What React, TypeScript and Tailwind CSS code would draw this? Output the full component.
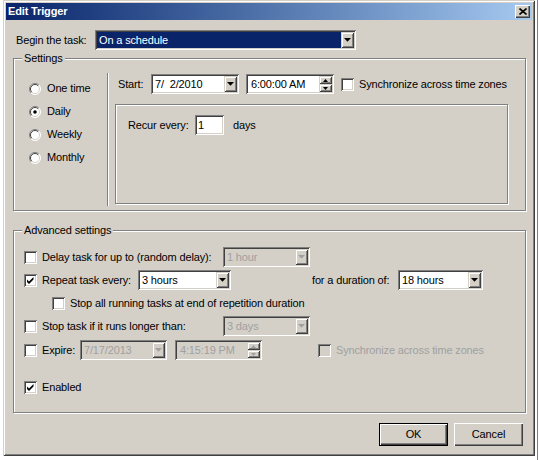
import type { ReactNode } from "react";

const sunken =
  "shadow-[inset_1px_1px_0_#808080,inset_-1px_-1px_0_#ffffff,inset_2px_2px_0_#404040,inset_-2px_-2px_0_#d4d0c8]";
const raised =
  "shadow-[inset_1px_1px_0_#d4d0c8,inset_-1px_-1px_0_#404040,inset_2px_2px_0_#ffffff,inset_-2px_-2px_0_#808080]";
const buttonRaised =
  "shadow-[inset_1px_1px_0_#ffffff,inset_-1px_-1px_0_#404040,inset_-2px_-2px_0_#808080]";
const etched = "border border-[#808080] shadow-[inset_1px_1px_0_#ffffff,1px_1px_0_#ffffff]";
const grayText = "text-[#a0a0a0]";

function Arrow({ up = false, small = false, disabled = false }: { up?: boolean; small?: boolean; disabled?: boolean }) {
  const fill = disabled ? "#a0a0a0" : "#000000";
  if (small) {
    return (
      <svg width="5" height="3" viewBox="0 0 5 3">
        <path d={up ? "M0 3h5L2.5 0z" : "M0 0h5L2.5 3z"} fill={fill} />
      </svg>
    );
  }
  return (
    <svg width="7" height="4" viewBox="0 0 7 4">
      <path d="M0 0h7L3.5 3.8z" fill={fill} />
    </svg>
  );
}

function DropButton({ disabled = false }: { disabled?: boolean }) {
  return (
    <div className={`flex w-[13px] shrink-0 items-center justify-center bg-[#d4d0c8] ${raised}`}>
      <Arrow disabled={disabled} />
    </div>
  );
}

function Combo({
  value,
  width,
  disabled = false,
  selected = false,
}: {
  value: string;
  width: string;
  disabled?: boolean;
  selected?: boolean;
}) {
  return (
    <div className={`flex h-[20px] shrink-0 p-[2px] ${width} ${sunken} ${disabled ? "bg-[#d4d0c8]" : "bg-white"}`}>
      <div
        className={`flex min-w-0 flex-1 items-center whitespace-pre pl-[2px] ${
          selected ? "bg-[#0a246a] text-white" : ""
        } ${disabled ? grayText : ""}`}
      >
        {value}
      </div>
      <DropButton disabled={disabled} />
    </div>
  );
}

function TimeField({ value, width, disabled = false }: { value: string; width: string; disabled?: boolean }) {
  return (
    <div className={`flex h-[20px] shrink-0 p-[2px] ${width} ${sunken} ${disabled ? "bg-[#d4d0c8]" : "bg-white"}`}>
      <div className={`flex flex-1 items-center whitespace-pre pl-[3px] ${disabled ? grayText : ""}`}>{value}</div>
      <div className="flex w-[13px] shrink-0 flex-col">
        <div className={`flex flex-1 items-center justify-center bg-[#d4d0c8] ${raised}`}>
          <Arrow up small disabled={disabled} />
        </div>
        <div className={`flex flex-1 items-center justify-center bg-[#d4d0c8] ${raised}`}>
          <Arrow small disabled={disabled} />
        </div>
      </div>
    </div>
  );
}

function Checkbox({ checked = false, disabled = false }: { checked?: boolean; disabled?: boolean }) {
  return (
    <div className={`h-[13px] w-[13px] shrink-0 ${sunken} ${disabled ? "bg-[#d4d0c8]" : "bg-white"}`}>
      {checked && (
        <svg width="13" height="13" viewBox="0 0 13 13">
          <path d="M3 5.5L5 7.5L9.5 3V5.5L5 10L3 8z" fill={disabled ? "#808080" : "#000000"} />
        </svg>
      )}
    </div>
  );
}

function Radio({ checked = false }: { checked?: boolean }) {
  return (
    <svg width="12" height="12" viewBox="0 0 12 12" className="shrink-0">
      <circle cx="6" cy="6" r="5.5" fill="#ffffff" />
      <path d="M2.1 9.9A5.5 5.5 0 0 1 9.9 2.1" stroke="#808080" fill="none" />
      <path d="M9.9 2.1A5.5 5.5 0 0 1 2.1 9.9" stroke="#ffffff" fill="none" />
      <path d="M2.8 9.2A4.5 4.5 0 0 1 9.2 2.8" stroke="#404040" fill="none" />
      <path d="M9.2 2.8A4.5 4.5 0 0 1 2.8 9.2" stroke="#d4d0c8" fill="none" />
      {checked && <circle cx="6" cy="6" r="1.8" fill="#000000" />}
    </svg>
  );
}

function GroupBox({ title, className, children }: { title: string; className: string; children: ReactNode }) {
  return (
    <div className={`relative ml-[7px] w-[513px] ${etched} ${className}`}>
      <span className="absolute left-[8px] top-[-7px] bg-[#d4d0c8] px-[2px] leading-[13px]">{title}</span>
      {children}
    </div>
  );
}

function Button({ label, isDefault = false }: { label: string; isDefault?: boolean }) {
  return (
    <div
      className={`flex h-[23px] w-[69px] items-center justify-center bg-[#d4d0c8] ${buttonRaised} ${
        isDefault ? "border border-black" : ""
      }`}
    >
      {label}
    </div>
  );
}

export default function App() {
  return (
    <div className="h-[460px] w-[540px] overflow-hidden bg-white font-['Liberation_Sans',Arial,sans-serif] text-[11px] tracking-[-0.15px] text-black">
      <div className="flex">
        <div
          className={`ml-[3px] flex h-[456px] w-[532px] flex-col bg-[#d4d0c8] p-[3px] shadow-[inset_1px_1px_0_#d4d0c8,inset_-1px_-1px_0_#404040,inset_2px_2px_0_#ffffff,inset_-2px_-2px_0_#808080]`}
        >
          {/* title bar */}
          <div className="flex h-[17px] items-center justify-between bg-linear-to-r from-[#0a246a] to-[#a6caf0] pl-[2px] pr-[2px]">
            <span className="font-bold text-white">Edit Trigger</span>
            <div className={`flex h-[13px] w-[15px] items-center justify-center bg-[#d4d0c8] ${buttonRaised}`}>
              <svg width="8" height="7" viewBox="0 0 8 7">
                <path d="M0.5 0.5L7.5 6.5M7.5 0.5L0.5 6.5" stroke="#000000" strokeWidth="1.6" />
              </svg>
            </div>
          </div>

          {/* begin the task */}
          <div className="mt-[10px] flex h-[20px] items-center pl-[10px]">
            <span className="w-[79px] shrink-0">Begin the task:</span>
            <Combo value="On a schedule" width="w-[261px]" selected />
          </div>

          {/* settings */}
          <GroupBox title="Settings" className="mt-[8px] flex h-[153px]">
            <div className="flex w-[93px] shrink-0 flex-col pl-[15px] pt-[18px]">
              {[
                ["One time", false],
                ["Daily", true],
                ["Weekly", false],
                ["Monthly", false],
              ].map(([label, checked]) => (
                <div key={label as string} className="flex h-[23px] items-center gap-[6px]">
                  <Radio checked={checked as boolean} />
                  <span>{label as string}</span>
                </div>
              ))}
            </div>
            <div className="mb-[4px] mt-[14px] w-[2px] shrink-0 border-l border-r border-l-[#808080] border-r-white" />
            <div className="flex flex-col">
              <div className="mt-[15px] flex h-[20px] items-center pl-[9px]">
                <span className="w-[33px] shrink-0">Start:</span>
                <Combo value={"7/  2/2010"} width="w-[88px]" />
                <div className="ml-[7px]">
                  <TimeField value="6:00:00 AM" width="w-[88px]" />
                </div>
                <div className="ml-[7px] flex items-center gap-[5px]">
                  <Checkbox />
                  <span className="whitespace-nowrap">Synchronize across time zones</span>
                </div>
              </div>
              <div className={`ml-[6px] mt-[10px] h-[100px] w-[393px] ${etched}`}>
                <div className="mt-[10px] flex h-[20px] items-center pl-[12px]">
                  <span className="w-[67px] shrink-0">Recur every:</span>
                  <div className={`flex h-[20px] w-[29px] items-center bg-white pl-[3px] ${sunken}`}>1</div>
                  <span className="ml-[9px]">days</span>
                </div>
              </div>
            </div>
          </GroupBox>

          {/* advanced settings */}
          <GroupBox title="Advanced settings" className="mt-[19px] flex h-[183px] flex-col pl-[10px] pt-[16px]">
            <div className="flex h-[20px] items-center">
              <Checkbox />
              <span className="ml-[5px] w-[181px] shrink-0">Delay task for up to (random delay):</span>
              <Combo value="1 hour" width="w-[87px]" disabled />
            </div>
            <div className="mt-[3px] flex h-[20px] items-center">
              <Checkbox checked />
              <span className="ml-[5px] w-[96px] shrink-0">Repeat task every:</span>
              <Combo value="3 hours" width="w-[93px]" />
              <span className="ml-[81px] w-[86px] shrink-0">for a duration of:</span>
              <Combo value="18 hours" width="w-[85px]" />
            </div>
            <div className="mt-[3px] flex h-[20px] items-center">
              <div className="ml-[28px]">
                <Checkbox />
              </div>
              <span className="ml-[5px]">Stop all running tasks at end of repetition duration</span>
            </div>
            <div className="mt-[3px] flex h-[20px] items-center">
              <Checkbox />
              <span className="ml-[5px] w-[181px] shrink-0">Stop task if it runs longer than:</span>
              <Combo value="3 days" width="w-[87px]" disabled />
            </div>
            <div className="mt-[4px] flex h-[20px] items-center">
              <Checkbox />
              <span className="ml-[5px] w-[38px] shrink-0">Expire:</span>
              <Combo value="7/17/2013" width="w-[87px]" disabled />
              <div className="ml-[8px]">
                <TimeField value="4:15:19 PM" width="w-[87px]" disabled />
              </div>
              <div className="ml-[56px] flex items-center gap-[5px]">
                <Checkbox disabled />
                <span className={`whitespace-nowrap ${grayText}`}>Synchronize across time zones</span>
              </div>
            </div>
            <div className="mt-[17px] flex h-[20px] items-center">
              <Checkbox checked />
              <span className="ml-[5px]">Enabled</span>
            </div>
          </GroupBox>

          {/* buttons */}
          <div className="mt-[10px] flex justify-end gap-[6px] pr-[9px]">
            <Button label="OK" isDefault />
            <Button label="Cancel" />
          </div>
        </div>
        <div className="ml-[2px] h-[460px] border-l border-[#808080]" />
      </div>
      <div className="pl-[18px] leading-[10px]">Run whether user is logged on or not</div>
    </div>
  );
}
